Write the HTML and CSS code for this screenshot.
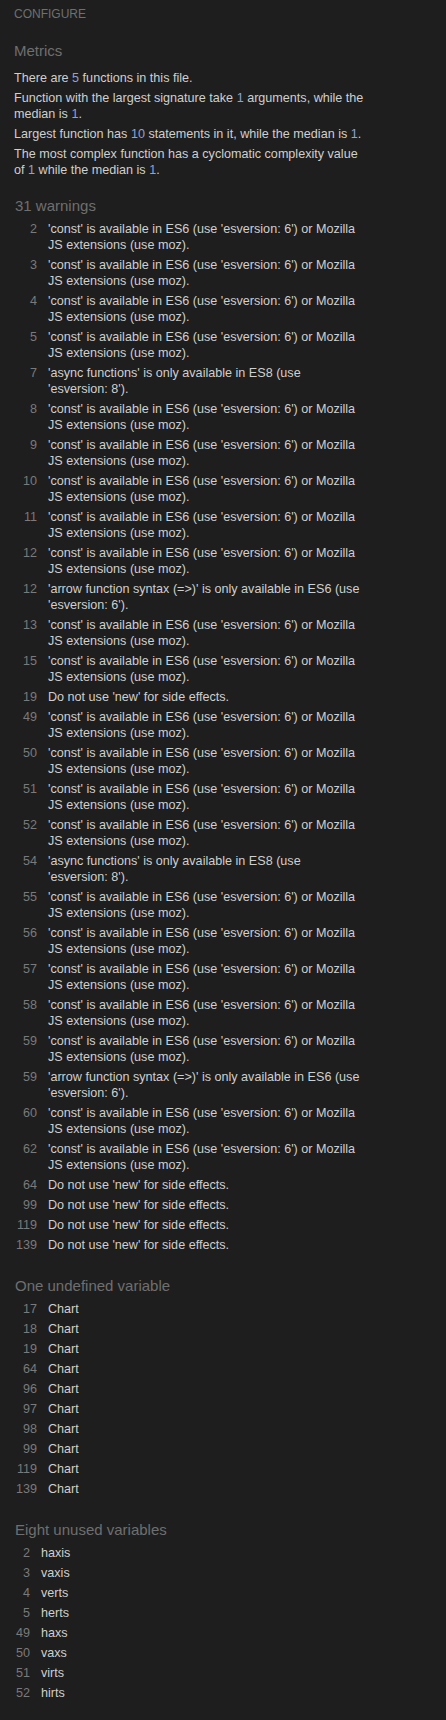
FILE: index.html
```html
<!DOCTYPE html>
<html>
<head>
<meta charset="utf-8">
<link rel="stylesheet" href="styles.css">
</head>
<body>
<div class="report">
  <div class="configure">CONFIGURE</div>

  <h2 class="metrics-title">Metrics</h2>
  <div class="metrics">
    <p>There are <span class="num">5</span> functions in this file.</p>
    <p>Function with the largest signature take <span class="num">1</span> arguments, while the median is <span class="num">1</span>.</p>
    <p>Largest function has <span class="num">10</span> statements in it, while the median is <span class="num">1</span>.</p>
    <p>The most complex function has a cyclomatic complexity value of <span class="num">1</span> while the median is <span class="num">1</span>.</p>
  </div>

  <h3 class="sec-title sec-first">31 warnings</h3>
  <table class="list">
    <tr><td class="ln">2</td><td class="msg">'const' is available in ES6 (use 'esversion: 6') or Mozilla JS extensions (use moz).</td></tr>
    <tr><td class="ln">3</td><td class="msg">'const' is available in ES6 (use 'esversion: 6') or Mozilla JS extensions (use moz).</td></tr>
    <tr><td class="ln">4</td><td class="msg">'const' is available in ES6 (use 'esversion: 6') or Mozilla JS extensions (use moz).</td></tr>
    <tr><td class="ln">5</td><td class="msg">'const' is available in ES6 (use 'esversion: 6') or Mozilla JS extensions (use moz).</td></tr>
    <tr><td class="ln">7</td><td class="msg">'async functions' is only available in ES8 (use 'esversion: 8').</td></tr>
    <tr><td class="ln">8</td><td class="msg">'const' is available in ES6 (use 'esversion: 6') or Mozilla JS extensions (use moz).</td></tr>
    <tr><td class="ln">9</td><td class="msg">'const' is available in ES6 (use 'esversion: 6') or Mozilla JS extensions (use moz).</td></tr>
    <tr><td class="ln">10</td><td class="msg">'const' is available in ES6 (use 'esversion: 6') or Mozilla JS extensions (use moz).</td></tr>
    <tr><td class="ln">11</td><td class="msg">'const' is available in ES6 (use 'esversion: 6') or Mozilla JS extensions (use moz).</td></tr>
    <tr><td class="ln">12</td><td class="msg">'const' is available in ES6 (use 'esversion: 6') or Mozilla JS extensions (use moz).</td></tr>
    <tr><td class="ln">12</td><td class="msg">'arrow function syntax (=&gt;)' is only available in ES6 (use 'esversion: 6').</td></tr>
    <tr><td class="ln">13</td><td class="msg">'const' is available in ES6 (use 'esversion: 6') or Mozilla JS extensions (use moz).</td></tr>
    <tr><td class="ln">15</td><td class="msg">'const' is available in ES6 (use 'esversion: 6') or Mozilla JS extensions (use moz).</td></tr>
    <tr><td class="ln">19</td><td class="msg">Do not use 'new' for side effects.</td></tr>
    <tr><td class="ln">49</td><td class="msg">'const' is available in ES6 (use 'esversion: 6') or Mozilla JS extensions (use moz).</td></tr>
    <tr><td class="ln">50</td><td class="msg">'const' is available in ES6 (use 'esversion: 6') or Mozilla JS extensions (use moz).</td></tr>
    <tr><td class="ln">51</td><td class="msg">'const' is available in ES6 (use 'esversion: 6') or Mozilla JS extensions (use moz).</td></tr>
    <tr><td class="ln">52</td><td class="msg">'const' is available in ES6 (use 'esversion: 6') or Mozilla JS extensions (use moz).</td></tr>
    <tr><td class="ln">54</td><td class="msg">'async functions' is only available in ES8 (use 'esversion: 8').</td></tr>
    <tr><td class="ln">55</td><td class="msg">'const' is available in ES6 (use 'esversion: 6') or Mozilla JS extensions (use moz).</td></tr>
    <tr><td class="ln">56</td><td class="msg">'const' is available in ES6 (use 'esversion: 6') or Mozilla JS extensions (use moz).</td></tr>
    <tr><td class="ln">57</td><td class="msg">'const' is available in ES6 (use 'esversion: 6') or Mozilla JS extensions (use moz).</td></tr>
    <tr><td class="ln">58</td><td class="msg">'const' is available in ES6 (use 'esversion: 6') or Mozilla JS extensions (use moz).</td></tr>
    <tr><td class="ln">59</td><td class="msg">'const' is available in ES6 (use 'esversion: 6') or Mozilla JS extensions (use moz).</td></tr>
    <tr><td class="ln">59</td><td class="msg">'arrow function syntax (=&gt;)' is only available in ES6 (use 'esversion: 6').</td></tr>
    <tr><td class="ln">60</td><td class="msg">'const' is available in ES6 (use 'esversion: 6') or Mozilla JS extensions (use moz).</td></tr>
    <tr><td class="ln">62</td><td class="msg">'const' is available in ES6 (use 'esversion: 6') or Mozilla JS extensions (use moz).</td></tr>
    <tr><td class="ln">64</td><td class="msg">Do not use 'new' for side effects.</td></tr>
    <tr><td class="ln">99</td><td class="msg">Do not use 'new' for side effects.</td></tr>
    <tr><td class="ln">119</td><td class="msg">Do not use 'new' for side effects.</td></tr>
    <tr><td class="ln">139</td><td class="msg">Do not use 'new' for side effects.</td></tr>
  </table>

  <h3 class="sec-title">One undefined variable</h3>
  <table class="list">
    <tr><td class="ln">17</td><td class="msg">Chart</td></tr>
    <tr><td class="ln">18</td><td class="msg">Chart</td></tr>
    <tr><td class="ln">19</td><td class="msg">Chart</td></tr>
    <tr><td class="ln">64</td><td class="msg">Chart</td></tr>
    <tr><td class="ln">96</td><td class="msg">Chart</td></tr>
    <tr><td class="ln">97</td><td class="msg">Chart</td></tr>
    <tr><td class="ln">98</td><td class="msg">Chart</td></tr>
    <tr><td class="ln">99</td><td class="msg">Chart</td></tr>
    <tr><td class="ln">119</td><td class="msg">Chart</td></tr>
    <tr><td class="ln">139</td><td class="msg">Chart</td></tr>
  </table>

  <h3 class="sec-title">Eight unused variables</h3>
  <table class="list">
    <tr><td class="ln">2</td><td class="msg">haxis</td></tr>
    <tr><td class="ln">3</td><td class="msg">vaxis</td></tr>
    <tr><td class="ln">4</td><td class="msg">verts</td></tr>
    <tr><td class="ln">5</td><td class="msg">herts</td></tr>
    <tr><td class="ln">49</td><td class="msg">haxs</td></tr>
    <tr><td class="ln">50</td><td class="msg">vaxs</td></tr>
    <tr><td class="ln">51</td><td class="msg">virts</td></tr>
    <tr><td class="ln">52</td><td class="msg">hirts</td></tr>
  </table>
</div>
</body>
</html>
```
FILE: styles.css
```css
html, body {
  margin: 0;
  padding: 0;
  background: #1e1e1e;
}

body {
  font-family: "Liberation Sans", Arial, Helvetica, sans-serif;
  color: #cfcfcf;
  min-height: 1720px;
}

.report {
  width: 347.5px;
  padding: 6px 0 0 14px;
}

.configure {
  font-size: 12px;
  line-height: 16px;
  color: #6f6f6f;
  text-transform: uppercase;
}

.metrics-title {
  margin: 19.3px 0 0;
  font-size: 15px;
  line-height: 20px;
  font-weight: normal;
  color: #6f6f6f;
}

.metrics {
  width: 351px;
  margin-top: 8.7px;
  font-size: 12.6px;
  line-height: 16px;
}

.metrics p {
  margin: 0 0 4px;
}

.num {
  color: #8ea3d4;
}

.sec-title {
  margin: 19.5px 0 0 1px;
  font-size: 15px;
  line-height: 20px;
  font-weight: normal;
  color: #6f6f6f;
}

.sec-first {
  margin-top: 18px;
}

.list {
  border-collapse: collapse;
  margin: 4.7px 0 0 1px;
  font-size: 12.6px;
  line-height: 16px;
}

.list td {
  padding: 0 0 4px;
  vertical-align: top;
}

.list .ln {
  text-align: right;
  color: #7a7a7a;
  padding-left: 1px;
  padding-right: 11px;
  white-space: nowrap;
}

.list .msg {
  color: #cfcfcf;
}
```
